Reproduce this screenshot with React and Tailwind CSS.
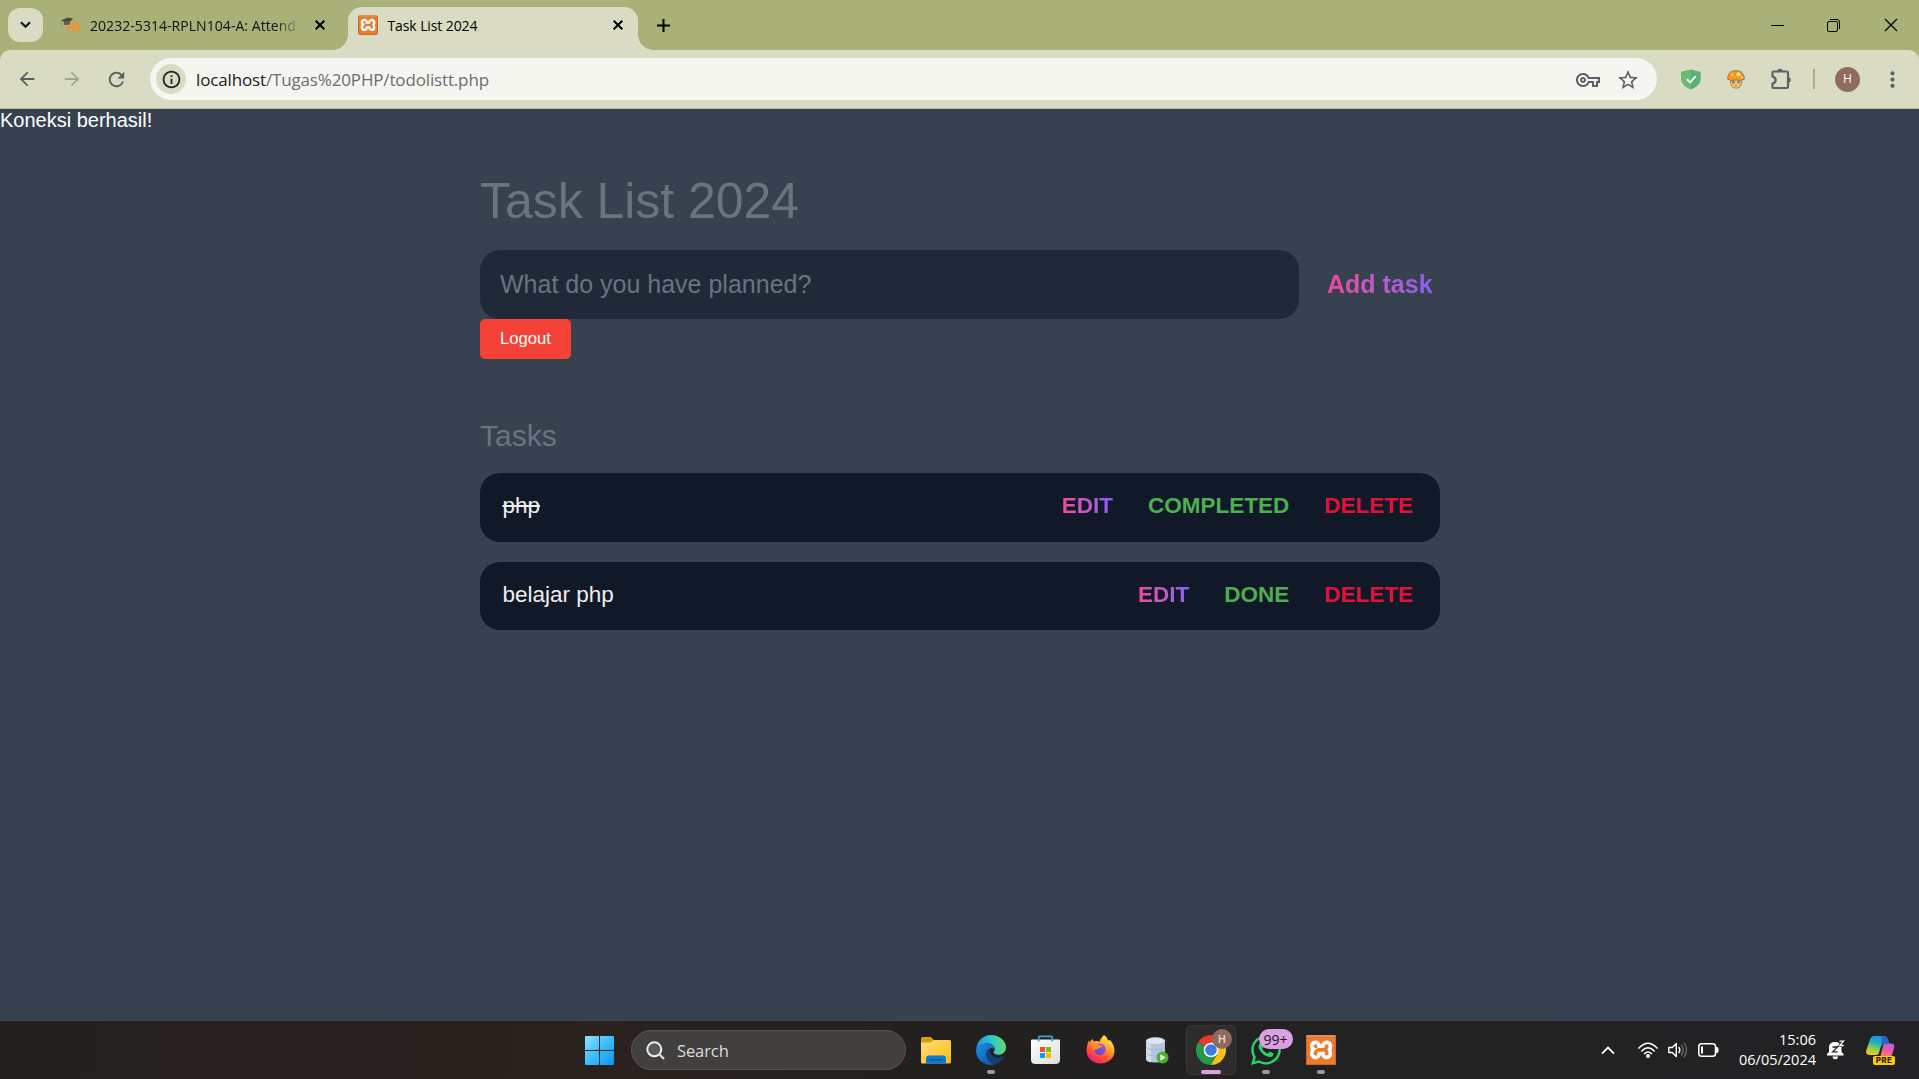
import React from "react";
import {
  MdArrowBack,
  MdArrowForward,
  MdRefresh,
  MdInfoOutline,
  MdOutlineVpnKey,
  MdStarOutline,
  MdMoreVert,
} from "react-icons/md";
import { SiXampp } from "react-icons/si";
import { FaWhatsapp } from "react-icons/fa";

const uiFont = "font-['Open_Sans','Noto_Sans',sans-serif]";

function XamppLogo({ className }) {
  return (
    <span className={`relative flex overflow-hidden rounded-[2px] bg-white ${className}`}>
      <SiXampp className="size-full scale-[1.02] text-[#ee7a2b]" />
      <span className="absolute inset-0 rounded-[2px] border border-t-2 border-[#c96a2c] border-t-[#dd8d5c]" />
    </span>
  );
}

function MoodleLogo() {
  return (
    <svg viewBox="0 0 21 16" className="h-4 w-[21px]">
      <path
        d="M8.5 14.5V9.2Q8.500 6.700 11 6.700T13.500 9.200V14.500M13.500 9.200Q13.500 6.700 16 6.700T18.500 9.200V14.500"
        fill="none"
        stroke="#f0923a"
        strokeWidth="2.800"
      />
      <path d="M1 3.6 8 .4l5.3 1.2-4.9 4.6Z" fill="#4a4a42" />
      <path d="M4 4.5v3.2q2.8.9 6-.4V3.8Z" fill="#5e5e52" />
      <path d="M1.6 4v6" stroke="#8f9474" strokeWidth=".7" />
    </svg>
  );
}

function Cross({ className, width = 2 }) {
  return (
    <svg viewBox="0 0 10 10" className={className}>
      <path d="M.7.7l8.6 8.6M9.3.7.7 9.3" fill="none" stroke="currentColor" strokeWidth={width} />
    </svg>
  );
}

function TabStrip() {
  return (
    <div className={`flex h-[50px] bg-[#a9b179] pl-2 text-black ${uiFont}`}>
      <button className="mt-2 flex h-[34px] w-[35px] items-center justify-center rounded-[12px] bg-[#d9dbc3]">
        <svg viewBox="0 0 11 8" className="h-2 w-[11px]">
          <path d="M1 1.3l4.5 4.4L10 1.3" fill="none" stroke="#111" strokeWidth="2.1" />
        </svg>
      </button>
      <div className="ml-[17px] flex w-[288px] items-center">
        <MoodleLogo />
        <span className="ml-[9px] w-[210px] whitespace-nowrap bg-[linear-gradient(90deg,#111_184px,transparent_212px)] bg-clip-text pt-px text-[14px] leading-6 tracking-[0.05px] text-transparent">
          20232-5314-RPLN104-A: Attend
        </span>
        <Cross className="ml-[15px] size-[10px]" />
      </div>
      <div className="relative mt-[7px] flex h-[43px] w-[290px] items-center rounded-t-[14px] bg-[#d9dbc3] pb-[7px] pl-[10px]">
        <span className="absolute -left-[15px] bottom-0 size-[15px] bg-[radial-gradient(circle_at_0_0,transparent_14.5px,#d9dbc3_15px)]" />
        <span className="absolute -right-[15px] bottom-0 size-[15px] bg-[radial-gradient(circle_at_100%_0,transparent_14.5px,#d9dbc3_15px)]" />
        <XamppLogo className="size-5" />
        <span className="ml-[9.500px] w-[225px] pt-px text-[14px] leading-6 tracking-[-0.1px]">Task List 2024</span>
        <Cross className="size-[10px]" />
      </div>
      <svg viewBox="0 0 13 13" className="ml-[18.500px] mt-[18.500px] size-[13px]">
        <path d="M6.5 0v13M0 6.5h13" stroke="#000" strokeWidth="2" />
      </svg>
      <div className="ml-auto mr-[21px] flex h-[50px] items-center">
        <span className="mr-[43px] h-px w-[13px] bg-black" />
        <svg viewBox="0 0 13 13" className="mr-11 size-[13px]" fill="none" stroke="#000">
          <rect x=".5" y="2.5" width="10" height="10" rx="1.5" />
          <path d="M3 .5h7a2.5 2.5 0 0 1 2.5 2.5v7" />
        </svg>
        <Cross className="size-[14px]" width={0.9} />
      </div>
    </div>
  );
}

function Mushroom() {
  return (
    <svg viewBox="0 0 18 19" className="h-[19px] w-[18px]">
      <path d="M3.5 9h11.3q.9 9.2-5.6 9.2T3.5 9Z" fill="#f7bf5c" stroke="#8a7a60" strokeWidth=".8" />
      <path d="M.5 9Q1 .6 9 .6T17.5 9q-4 2.4-8.5.9Q4 11.400.5 9Z" fill="#f59a1c" stroke="#a8641f" strokeWidth=".8" />
      <circle cx="11.300" cy="4.500" r="2" fill="#ffe9c4" />
      <circle cx="5" cy="4.500" r="1.200" fill="#fbc76f" />
      <circle cx="14.800" cy="7.500" r="1" fill="#ffe9c4" />
      <circle cx="6.300" cy="12" r="1.500" fill="#5d88b8" />
      <circle cx="11.800" cy="12" r="1.500" fill="#5d88b8" />
      <path d="M7.800 15.300h2.600" stroke="#c9823a" />
    </svg>
  );
}

function PuzzleIcon({ className }) {
  return (
    <svg viewBox="0 0 22 22" className={className}>
      <path
        d="M2.500 4.500q0-1 1-1H17q1 0 1 1V19q0 1-1 1H3.500q-1 0-1-1v-3.500q3.200-.8 3.200-3.500T2.500 8.500Z"
        fill="none"
        stroke="#5f6168"
        strokeWidth="2.200"
        strokeLinejoin="round"
      />
      <path d="M7.400 3.500a2.700 2.700 0 0 1 5.400 0ZM18 9.300a2.700 2.700 0 0 1 0 5.400Z" fill="#5f6168" />
    </svg>
  );
}

function Toolbar() {
  return (
    <div className="bg-[#a9b179]">
      <div className="flex h-[59px] items-center rounded-t-[10px] border-b border-[#b9bca2] bg-[#d9dbc3] text-[#5c5f63]">
        <div className="flex w-[150px] items-center pl-[16px]">
          <MdArrowBack className="size-[22px]" />
          <MdArrowForward className="ml-[23px] size-[22px] text-[#a4a697]" />
          <MdRefresh className="ml-[22px] size-[23px]" />
        </div>
        <div className="flex h-[42px] w-[1507px] items-center rounded-full bg-[#f5f6f0] pl-[6px] pr-[17.500px]">
          <span className="flex size-[30px] items-center justify-center rounded-full bg-[#d9dbc3]">
            <MdInfoOutline className="size-[21px] text-[#1f1f1f]" />
          </span>
          <span className={`ml-[10px] pt-px text-[17px] leading-6 tracking-[-0.150px] text-[#6b6d6e] ${uiFont}`}>
            <span className="text-[#1f2023]">localhost</span>/Tugas%20PHP/todolistt.php
          </span>
          <MdOutlineVpnKey className="ml-auto mt-px size-[24px]" />
          <MdStarOutline className="ml-[16px] mt-px size-[24px]" />
        </div>
        <svg viewBox="0 0 20 21" className="ml-[23.500px] h-[21px] w-5">
          <path d="M10 .4 19.700 3v7q0 6.500-9.700 10.600Q.300 16.500.300 10V3Z" fill="#5fae72" />
          <path d="M10 .4.300 3v7q0 6.500 9.700 10.600Z" fill="#68bc71" />
          <path d="M6 10.200l3.200 3.300 5.500-6.500" fill="none" stroke="#fff" strokeWidth="1.800" />
        </svg>
        <span className="ml-[26.500px]"><Mushroom /></span>
        <PuzzleIcon className="ml-[25px] mb-px size-[22px]" />
        <span className="ml-[21px] h-[20px] w-[2px] bg-[#a9b179]" />
        <span className={`ml-5 flex size-[25px] items-center justify-center rounded-full bg-[#8f6b60] text-[12px] text-white ${uiFont}`}>H</span>
        <MdMoreVert className="ml-[20px] size-[25px]" />
      </div>
    </div>
  );
}

const gradientText = "bg-linear-to-r from-[#ec4899] to-[#8b5cf6] bg-clip-text text-transparent";

function TaskRow({ title, done, height }) {
  return (
    <li className={`flex items-center justify-between rounded-[20px] bg-[#111827] pl-[22.500px] pr-[27px] text-[22.500px] leading-[26px] ${height}`}>
      <span className={done ? "pb-[3px] text-[#eee] line-through" : "pb-[2px] text-[#eee]"}>{title}</span>
      <span className={`flex gap-[35px] font-bold ${done ? "pb-[3px]" : "pb-[2px]"}`}>
        <a className={gradientText}>EDIT</a>
        <a className="text-[#4caf50]">{done ? "COMPLETED" : "DONE"}</a>
        <a className="text-[#dc143c]">DELETE</a>
      </span>
    </li>
  );
}

function Page() {
  return (
    <div className="h-[911px] bg-[#384150] font-['Liberation_Sans',Arial,sans-serif]">
      <p className="h-[53px] text-[20px] leading-[23px] text-white">Koneksi berhasil!</p>
      <main className="ml-[480px] w-[960px]">
        <h1 className="pt-[10px] text-[50px] leading-[58px] tracking-[-0.05px] text-[#6b7280]">Task List 2024</h1>
        <form className="mt-5 flex h-[69px] items-center">
          <div className="flex h-full w-[819px] items-center rounded-[20px] bg-[#1f2937] pl-5 text-[25px] leading-[29px] text-[#6b7280]">
            What do you have planned?
          </div>
          <button type="button" className={`ml-[28px] pb-px text-[25px] font-bold leading-[29px] ${gradientText}`}>Add task</button>
        </form>
        <button className="block h-10 w-[91px] rounded-[5px] bg-[#f44336] text-[16.660px] text-white">Logout</button>
        <h2 className="mt-[60px] text-[30px] leading-[34px] text-[#6b7280]">Tasks</h2>
        <ul className="mt-5 flex flex-col gap-5">
          <TaskRow title="php" done height="h-[69px]" />
          <TaskRow title="belajar php" height="h-[68px]" />
        </ul>
      </main>
    </div>
  );
}

function WindowsLogo() {
  return (
    <svg viewBox="0 0 29 29" className="mt-px size-[29px]">
      <defs>
        <linearGradient id="win" x1="0" y1="0" x2="29" y2="29" gradientUnits="userSpaceOnUse">
          <stop stopColor="#8be3ff" />
          <stop offset=".5" stopColor="#3cbcfa" />
          <stop offset="1" stopColor="#0a94fb" />
        </linearGradient>
      </defs>
      <path d="M1 0h13v14H0V1a1 1 0 0 1 1-1ZM15 0h13a1 1 0 0 1 1 1v13H15ZM0 15h14v14H1a1 1 0 0 1-1-1ZM15 15h14v13a1 1 0 0 1-1 1H15Z" fill="url(#win)" />
    </svg>
  );
}

function FolderIcon() {
  return (
    <svg viewBox="0 0 30 27" className="h-[27px] w-[30px]">
      <defs>
        <linearGradient id="folder" x1="0" y1="0" x2="1" y2="1">
          <stop stopColor="#ffe07a" />
          <stop offset="1" stopColor="#fcba12" />
        </linearGradient>
      </defs>
      <path d="M0 1.500Q0 0 1.500 0h8.300l3 3H28v8H0Z" fill="#dd9c05" />
      <path d="M0 5.500h9.500L13 3h15.500Q30 3 30 4.500V25q0 1.500-1.500 1.500h-27Q0 26.500 0 25Z" fill="url(#folder)" />
      <path d="M5 26.500V21q0-2.500 2.500-2.500h15q2.500 0 2.500 2.500v5.500Z" fill="#0f78d0" />
      <path d="M8.500 22.700h13" stroke="#0a4a94" strokeWidth="1.200" />
    </svg>
  );
}

function EdgeIcon() {
  return (
    <svg viewBox="0 0 30 30" className="size-[30px]">
      <defs>
        <linearGradient id="edgeTop" x1="0" y1=".5" x2="1" y2=".4">
          <stop stopColor="#1b96dc" />
          <stop offset=".5" stopColor="#2dc0d9" />
          <stop offset="1" stopColor="#66e05f" />
        </linearGradient>
        <linearGradient id="edgeLow" x1="0" y1="0" x2="1" y2="1">
          <stop stopColor="#1b8fe0" />
          <stop offset="1" stopColor="#0d4f9b" />
        </linearGradient>
      </defs>
      <path d="M.3 13.500C1.200 5.500 7.500 0 15 0c8.500 0 15 6 15 12.500 0 4.500-3.500 7.300-7.500 7.300-3.300 0-5-1.200-5-2.300 0-.9 1.200-1.400 1.200-3.300 0-3-3-5.700-7.500-5.700C5.500 8.500 1.500 11.500.3 13.500Z" fill="url(#edgeTop)" />
      <path d="M.1 14.500C1 10.500 6 8.300 11.500 8.500c4.200.2 7 2.500 7.200 5.300-4-2.300-8.200.7-8.200 5.200 0 5.500 4.700 9.800 9.500 10-1.500.7-3.200 1-5 1C6.500 30-.5 23.500.1 14.500Z" fill="url(#edgeLow)" />
      <path d="M14.500 13c-2.500 1-4 3.300-4 6 0 5.500 4.700 9.800 9.500 10 3.300-1.200 6-3.700 7.600-6.500.4-.8-.2-1-.8-.7-6 2.600-14.600-.8-12.300-8.800Z" fill="#123f79" />
    </svg>
  );
}

function StoreIcon() {
  return (
    <svg viewBox="0 0 29 29" className="mb-px mr-px size-[29px]">
      <defs>
        <linearGradient id="bag" x1="0" y1="0" x2="1" y2="1">
          <stop stopColor="#ffffff" />
          <stop offset="1" stopColor="#dcdcde" />
        </linearGradient>
      </defs>
      <path d="M0 5.500q0-1 1-1h27q1 0 1 1v19q0 4.500-4.500 4.500h-20Q0 29 0 24.500Z" fill="url(#bag)" />
      <path d="M7.700 6.500V2.500q0-1.100 1.100-1.100h11.400q1.100 0 1.100 1.100v4" fill="none" stroke="#2aa6e4" strokeWidth="1.700" />
      <path d="M9 12h5v5H9Z" fill="#f25022" />
      <path d="M15 12h5v5h-5Z" fill="#7fba00" />
      <path d="M9 18h5v5H9Z" fill="#00a4ef" />
      <path d="M15 18h5v5h-5Z" fill="#ffb900" />
    </svg>
  );
}

function FirefoxIcon() {
  return (
    <svg viewBox="0 0 29 29" className="mb-px mr-px size-[29px]">
      <defs>
        <linearGradient id="fox" x1=".8" y1="0" x2=".25" y2="1">
          <stop stopColor="#fff14f" />
          <stop offset=".35" stopColor="#ffae2a" />
          <stop offset=".68" stopColor="#ff5037" />
          <stop offset="1" stopColor="#e9177f" />
        </linearGradient>
        <linearGradient id="globe" x1=".7" y1="0" x2=".3" y2="1">
          <stop stopColor="#b04cf0" />
          <stop offset="1" stopColor="#4a50c8" />
        </linearGradient>
      </defs>
      <path d="M17.800 0c3 1.500 3.800 4.300 4.300 5.600l2-.6c3 3.500 4.400 7 4.400 10.500C28.500 23 22.500 28.500 14.500 28.500S.5 23 .5 15.300C.5 11.500 2 8 3 5l.5 2.200L6.500 4 8 6.500c2.500-.8 4.300-.5 5.800.2C14 4 16 2.500 17.800 0Z" fill="url(#fox)" />
      <circle cx="14" cy="14.200" r="5.700" fill="url(#globe)" />
      <path d="M4.500 8.500c4-1.700 7-.5 9 1.800l3.400.5c-.3 1.700-3 1.500-4.300 2.500-2 2-4 .5-5 2.700Z" fill="#ff8a2b" />
    </svg>
  );
}

function DatabaseIcon() {
  return (
    <svg viewBox="0 0 24 27" className="ml-[2px] h-[27px] w-6">
      <path d="M1 4v18q0 3.500 9.500 3.500T20 22V4Z" fill="#b4c5de" />
      <path d="M1 4v18q.5 2.500 5 3.200V6Z" fill="#cfdcee" />
      <path d="M1 10q2 3 9.500 3T20 10M1 16q2 3 9.500 3T20 16" fill="none" stroke="#9aaecb" strokeWidth=".7" />
      <ellipse cx="10.500" cy="4" rx="9.500" ry="3.500" fill="#dde7f4" stroke="#a9bad3" strokeWidth=".7" />
      <circle cx="17.500" cy="20.500" r="6" fill="#4bae2d" />
      <path d="M15.500 17.300v6.400l5-3.200Z" fill="#fff" />
    </svg>
  );
}

function ChromeIcon() {
  return (
    <svg viewBox="0 0 30 30" className="size-[30px]">
      <path d="M15 15 2 7.500A15 15 0 0 1 28 7.500Z" fill="#e33b2e" />
      <path d="M2 7.500A15 15 0 0 0 15 30l6.500-11.200L15 15Z" fill="#249a48" />
      <path d="M28 7.500H15V15l6.500 3.800L15 30A15 15 0 0 0 28 7.500Z" fill="#fbc116" />
      <circle cx="15" cy="15" r="7.300" fill="#fff" />
      <circle cx="15" cy="15" r="5.800" fill="#3a7cec" />
    </svg>
  );
}

function AppSlot({ children, marker }) {
  return (
    <div className="relative flex h-[58px] w-[55px] items-center justify-center">
      {children}
      {marker && <span className="absolute bottom-[5px] h-1 w-2 rounded-full bg-[#9a9a9a]" />}
    </div>
  );
}

function CopilotIcon() {
  return (
    <svg viewBox="0 0 29 29" className="size-[29px]">
      <defs>
        <linearGradient id="copA" x1=".6" y1="0" x2=".3" y2="1">
          <stop stopColor="#1c8fe8" />
          <stop offset=".4" stopColor="#25b0b8" />
          <stop offset=".7" stopColor="#8fd04d" />
          <stop offset="1" stopColor="#f5c51c" />
        </linearGradient>
        <linearGradient id="copB" x1=".7" y1="0" x2=".4" y2="1">
          <stop stopColor="#b45cf0" />
          <stop offset=".5" stopColor="#ee5b9c" />
          <stop offset="1" stopColor="#fb8a55" />
        </linearGradient>
      </defs>
      <path d="M19 7.500h6q4 0 3.200 4L26 19q-1 3-5 3h-7l2.800-11.500q.7-3 2.200-3Z" fill="url(#copB)" />
      <path d="M8.500 0h9q3.500 0 4.500 3.500l1 4h-4q-3 0-4 3L12.500 18q-.5 1-2 1H4Q-.8 19 .3 14L4 3.500Q5.100 0 8.500 0Z" fill="url(#copA)" />
      <path d="M15.500 0h2Q21 0 22 3.500l1 4h-4q-2.500 0-3.500 2Z" fill="#2a63c8" />
    </svg>
  );
}

function Tray() {
  return (
    <div className="ml-auto flex h-[58px] items-center pr-[24px]">
      <svg viewBox="0 0 14 9" className="h-[9px] w-[14px]">
        <path d="M1 7.700 7 1.500l6 6.200" fill="none" stroke="#fff" strokeWidth="1.800" />
      </svg>
      <svg viewBox="0 0 20 16" className="ml-[23px] h-4 w-5" fill="none" stroke="#fff" strokeWidth="1.500" strokeLinecap="round">
        <path d="M1 6.100q9-9.500 18 0M3.800 8.900q6.200-6.400 12.400 0M6.600 11.600q3.400-3.300 6.800 0" />
        <circle cx="10" cy="14" r="1.200" fill="#fff" />
      </svg>
      <svg viewBox="0 0 20 18" className="ml-[10px] h-[18px] w-5" fill="none" strokeLinejoin="round" strokeWidth="1.400">
        <path d="M.8 6.500h3.500l4-4v13l-4-4H.8Z" stroke="#fff" />
        <path d="M11 6.400q1.700 2.600 0 5.200" stroke="#fff" strokeLinecap="round" />
        <path d="M13.500 4.200q3.300 4.800 0 9.600M16.200 2.200q4.600 6.800 0 13.600" stroke="#6b6969" strokeLinecap="round" />
      </svg>
      <svg viewBox="0 0 21 14" className="ml-[10px] h-[14px] w-[21px]">
        <rect x=".8" y=".8" width="16.700" height="12.400" rx="2.800" fill="none" stroke="#fff" strokeWidth="1.500" />
        <path d="M3 3.500h2v7H3Z" fill="#fff" />
        <path d="M18.300 4.500h.7q1 0 1 1v3q0 1-1 1h-.7Z" fill="#fff" stroke="#fff" />
      </svg>
      <div className={`ml-[17.500px] w-[80px] text-right text-[14.500px] leading-5 whitespace-nowrap text-white ${uiFont}`}>
        <p>15:06</p>
        <p className="-ml-4">06/05/2024</p>
      </div>
      <svg viewBox="0 0 18 20" className="ml-[10.500px] h-5 w-[18px]">
        <path d="M0 15.500V14l2-2V7.500q0-5.500 6-5.500t6.500 5.500V12l2 2v1.500ZM5.300 16.500h6q-.5 2.700-3 2.700t-3-2.700Z" fill="#fff" />
        <path d="M5.500 7h5l-4.800 4.800h5" fill="none" stroke="#242326" strokeWidth="1.300" />
        <path d="M12.500 1.200h4l-3.800 4.300h4" fill="none" stroke="#242326" strokeWidth="2.600" />
        <path d="M12.500 1.200h4l-3.800 4.300h4" fill="none" stroke="#fff" strokeWidth="1.300" />
      </svg>
      <div className="relative ml-[21.500px]">
        <CopilotIcon />
        <span className="absolute bottom-0 left-[7px] flex h-[9px] w-[22px] items-center justify-center rounded-[2px] bg-[#ffc90e] font-['Inter',sans-serif] text-[8px] font-extrabold leading-none tracking-[0.4px] text-[#2b2412]">PRE</span>
      </div>
    </div>
  );
}

function Taskbar() {
  return (
    <div className="flex h-[59px] items-end border-t border-[#45434a] bg-[linear-gradient(90deg,#242020_0%,#29221e_32%,#22201f_48%,#222222_70%,#222124_100%)] pl-[585px]">
      <div className="flex h-[58px] items-center">
        <WindowsLogo />
        <div className="ml-[17px] flex h-10 w-[275px] items-center rounded-full border border-[#575452] bg-[#42403e] pl-[14px]">
          <svg viewBox="0 0 19 19" className="size-[19px]">
            <circle cx="8.300" cy="8.300" r="7" fill="#5c5a59" stroke="#eee" strokeWidth="2" />
            <path d="m13.300 13.300 4.700 4.700" stroke="#ddd" strokeWidth="2.200" />
          </svg>
          <span className={`ml-[12px] pt-px text-[16.500px] leading-6 tracking-[-0.1px] text-[#dcdbda] ${uiFont}`}>Search</span>
        </div>
      </div>
      <div className="ml-[2.500px] flex">
        <AppSlot><FolderIcon /></AppSlot>
        <AppSlot marker><EdgeIcon /></AppSlot>
        <AppSlot><StoreIcon /></AppSlot>
        <AppSlot><FirefoxIcon /></AppSlot>
        <AppSlot><DatabaseIcon /></AppSlot>
        <AppSlot>
          <span className="relative flex size-[50px] items-center justify-center rounded-[5px] border border-[#393736] bg-[#2e2c2b]">
            <ChromeIcon />
            <span className={`absolute right-[3px] top-[3px] flex size-5 items-center justify-center rounded-full bg-[#8b6a60] text-[11px] font-semibold text-[#e6dcd9] ${uiFont}`}>H</span>
            <span className="absolute bottom-0 h-1 w-5 rounded-full bg-[#dd9fe0]" />
          </span>
        </AppSlot>
        <AppSlot marker>
          <FaWhatsapp className="size-[34px] text-[#25d366]" />
          <span className={`absolute left-[20px] top-[8px] flex h-5 w-[34px] items-center justify-center rounded-full bg-[#dd9fe4] text-[14px] text-[#1d141e] ${uiFont}`}>99+</span>
        </AppSlot>
        <AppSlot marker><XamppLogo className="size-[30px]" /></AppSlot>
      </div>
      <Tray />
    </div>
  );
}

export default function App() {
  return (
    <div className="flex h-[1079px] w-[1919px] flex-col overflow-hidden">
      <TabStrip />
      <Toolbar />
      <Page />
      <Taskbar />
    </div>
  );
}
